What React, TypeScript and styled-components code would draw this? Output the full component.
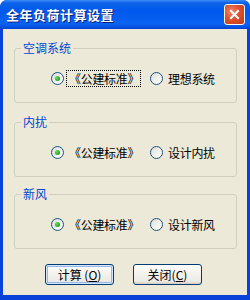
import styled, { createGlobalStyle } from "styled-components";

const GlobalStyle = createGlobalStyle`
  html, body {
    margin: 0;
    padding: 0;
    background: #ffffff;
  }
  * {
    box-sizing: border-box;
  }
`;

const Window = styled.div`
  width: 250px;
  height: 300px;
  display: flex;
  flex-direction: column;
  background: #0842d8;
  border-radius: 7px 7px 0 0;
  overflow: hidden;
  font-family: "Noto Sans CJK SC", "Liberation Sans", sans-serif;
  font-size: 12px;
`;

const TitleBar = styled.div`
  height: 29px;
  flex: none;
  display: flex;
  align-items: center;
  justify-content: space-between;
  padding: 0 5px 0 6px;
  background: linear-gradient(
    180deg,
    #3b8cf8 0%,
    #0d62e6 10%,
    #0058ee 40%,
    #0a63f2 80%,
    #0651e0 94%,
    #0540cf 100%
  );
`;

const Title = styled.span`
  color: #ffffff;
  font-weight: 700;
  font-size: 13px;
  letter-spacing: 0.5px;
  text-shadow: 1px 1px 0 #0a1f7a;
`;

const CloseButton = styled.div`
  width: 21px;
  height: 21px;
  border: 1px solid #ffffff;
  border-radius: 3px;
  display: flex;
  align-items: center;
  justify-content: center;
  background: radial-gradient(circle at 35% 35%, #f08a6a 0%, #dd5030 45%, #c23a12 100%);
`;

const Body = styled.div`
  flex: 1;
  margin: 0 3px 5px 3px;
  background: #ece9d8;
  padding: 13px 10px 0 11px;
  display: flex;
  flex-direction: column;
`;

const Group = styled.fieldset<{ $gap: number }>`
  margin: 0 0 ${(p) => p.$gap}px 0;
  padding: 0;
  height: 61px;
  border: 1px solid #d0d0bf;
  border-radius: 3px;
  min-width: 0;
`;

const Legend = styled.legend`
  margin-left: 6px;
  padding: 0 2px;
  line-height: 12px;
  font-size: 12px;
  color: #0046d5;
`;

const Row = styled.div`
  margin-top: 16px;
  height: 16px;
  display: flex;
  align-items: center;
  padding-left: 36px;
`;

const Option = styled.label<{ $width?: number }>`
  display: flex;
  align-items: center;
  width: ${(p) => (p.$width ? `${p.$width}px` : "auto")};
  color: #000000;
`;

const Circle = styled.span<{ $checked: boolean }>`
  width: 13px;
  height: 13px;
  flex: none;
  border-radius: 50%;
  border: 1px solid #1c5180;
  background: linear-gradient(135deg, #dcdcd7 0%, #f4f4f0 60%, #ffffff 100%);
  display: flex;
  align-items: center;
  justify-content: center;
  &::after {
    content: "";
    display: ${(p) => (p.$checked ? "block" : "none")};
    width: 5px;
    height: 5px;
    border-radius: 50%;
    background: radial-gradient(circle at 35% 35%, #5fe05f 0%, #21a121 70%, #148014 100%);
  }
`;

const OptionText = styled.span<{ $focused?: boolean }>`
  margin-left: 2px;
  padding: 1px 1px 1px 2px;
  line-height: 13px;
  white-space: nowrap;
  letter-spacing: -0.3px;
  border: 1px dotted ${(p) => (p.$focused ? "#000000" : "transparent")};
`;

const ButtonRow = styled.div`
  margin-top: 2px;
  display: flex;
  gap: 19px;
  padding-left: 31px;
`;

const Button = styled.div<{ $default?: boolean }>`
  width: 69px;
  height: 21px;
  border: 1px solid #003c74;
  border-radius: 3px;
  display: flex;
  align-items: center;
  justify-content: center;
  color: #000000;
  font-size: 12px;
  white-space: pre;
  background: linear-gradient(180deg, #ffffff 0%, #f4f3ee 40%, #ecebe6 85%, #d6d0c5 100%);
  box-shadow: ${(p) =>
    p.$default
      ? "inset 0 0 0 1px #cee7ff, inset 0 0 0 2px #98b8ea"
      : "inset 0 -1px 0 #d6d0c5"};
`;

const groups = [
  { title: "空调系统", second: "理想系统", gap: 13, focused: true },
  { title: "内扰", second: "设计内扰", gap: 11, focused: false },
  { title: "新风", second: "设计新风", gap: 13, focused: false },
];

export default function App() {
  return (
    <>
      <GlobalStyle />
      <Window>
        <TitleBar>
          <Title>全年负荷计算设置</Title>
          <CloseButton>
            <svg width="11" height="11" viewBox="0 0 11 11">
              <path d="M2 2 L9 9 M9 2 L2 9" stroke="#ffffff" strokeWidth="2" strokeLinecap="square" />
            </svg>
          </CloseButton>
        </TitleBar>
        <Body>
          {groups.map((g) => (
            <Group key={g.title} $gap={g.gap}>
              <Legend>{g.title}</Legend>
              <Row>
                <Option $width={99}>
                  <Circle $checked />
                  <OptionText $focused={g.focused}>《公建标准》</OptionText>
                </Option>
                <Option>
                  <Circle $checked={false} />
                  <OptionText>{g.second}</OptionText>
                </Option>
              </Row>
            </Group>
          ))}
          <ButtonRow>
            <Button $default>
              计算 (<u>O</u>)
            </Button>
            <Button>
              关闭(<u>C</u>)
            </Button>
          </ButtonRow>
        </Body>
      </Window>
    </>
  );
}
